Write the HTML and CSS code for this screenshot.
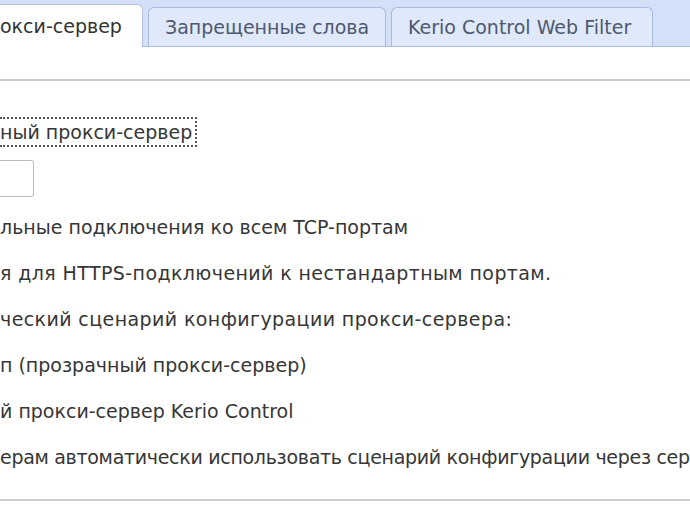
FILE: index.html
```html
<!DOCTYPE html>
<html lang="ru">
<head>
  <meta charset="UTF-8">
  <title>Прокси-сервер</title>
  <link rel="stylesheet" href="styles.css">
</head>
<body>

  <div class="tabs">
    <div class="tab active">окси-сервер</div>
    <div class="tab">Запрещенные слова</div>
    <div class="tab">Kerio Control Web Filter</div>
  </div>

  <div class="panel">
    <div class="panel-head"></div>

    <div class="form">
      <div class="row first">
        <span class="focus">ный прокси-сервер</span>
      </div>
      <div class="row port">
        <input class="port-input" type="text" value="">
      </div>
      <div class="row">льные подключения ко всем TCP-портам</div>
      <div class="row wide">я для HTTPS-подключений к нестандартным портам.</div>
      <div class="row wide">ческий сценарий конфигурации прокси-сервера:</div>
      <div class="row">п (прозрачный прокси-сервер)</div>
      <div class="row">й прокси-сервер Kerio Control</div>
      <div class="row tight">ерам автоматически использовать сценарий конфигурации через сер</div>
    </div>

    <div class="panel-foot"></div>
  </div>

</body>
</html>
```

FILE: styles.css
```css
* {
  margin: 0;
  padding: 0;
  box-sizing: border-box;
}

body {
  background: #fff;
  font-family: 'DejaVu Sans', Verdana, sans-serif;
  font-size: 19px;
  color: #363636;
  overflow: hidden;
  width: 690px;
}

.tabs {
  display: flex;
  align-items: flex-end;
  gap: 5px;
  height: 47px;
  padding-top: 4px;
  background: #d3e0f7;
  border-bottom: 1px solid #a9bde0;
}

.tab {
  height: 39px;
  padding: 0 16px;
  display: flex;
  align-items: center;
  color: #4e5870;
  background: #dfe9fa;
  border: 1px solid #a7bbdf;
  border-bottom: none;
  border-radius: 6px 6px 0 0;
  white-space: nowrap;
}

.tab:nth-child(2) {
  width: 238px;
}

.tab:nth-child(3) {
  width: 262px;
}

.tab.active {
  width: 143px;
  height: 43px;
  margin-bottom: -1px;
  padding-left: 0;
  color: #333;
  background: #fff;
  border-left: none;
  border-color: #b4c4e0;
  border-radius: 0 6px 0 0;
}

.panel-head {
  height: 34px;
  border-bottom: 2px solid #cdcdcd;
}

.form {
  display: flex;
  flex-direction: column;
  padding-top: 36px;
}

.row {
  height: 46px;
  line-height: 24px;
  white-space: nowrap;
}

.row.wide {
  letter-spacing: 0.4px;
}

.row.tight {
  letter-spacing: -0.3px;
}

.row.first {
  height: 43px;
}

.focus {
  display: inline-block;
  padding: 1px 3px 1px 0;
  border: 2px dotted #555;
  border-left: none;
}

.row.port {
  height: 55px;
}

.port-input {
  display: block;
  width: 34px;
  height: 37px;
  border: 1px solid #bdbdbd;
  border-left: none;
  border-radius: 0 3px 3px 0;
  background: #fff;
}

.panel-foot {
  margin-top: 8px;
  border-bottom: 2px solid #cdcdcd;
}
```
